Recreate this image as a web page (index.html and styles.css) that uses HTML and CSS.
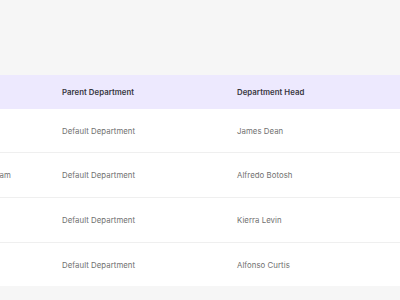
FILE: index.html
```html
<!DOCTYPE html>
<html lang="en">

<head>
    <meta charset="UTF-8">
    <meta name="viewport" content="width=device-width, initial-scale=1.0">
    <link rel="stylesheet" href="styles.css">
    <title>Departments</title>
</head>

<body>

    <div class="page">
        <div class="table-wrap">
            <table class="dept-table">
                <thead>
                    <tr>
                        <th class="col-name">Name</th>
                        <th class="col-parent">Parent Department</th>
                        <th class="col-head">Department Head</th>
                    </tr>
                </thead>
                <tbody>
                    <tr>
                        <td class="col-name">Sales</td>
                        <td>Default Department</td>
                        <td>James Dean</td>
                    </tr>
                    <tr>
                        <td class="col-name">Product Team</td>
                        <td>Default Department</td>
                        <td>Alfredo Botosh</td>
                    </tr>
                    <tr>
                        <td class="col-name">HR</td>
                        <td>Default Department</td>
                        <td>Kierra Levin</td>
                    </tr>
                    <tr>
                        <td class="col-name">IT</td>
                        <td>Default Department</td>
                        <td>Alfonso Curtis</td>
                    </tr>
                </tbody>
            </table>
        </div>
    </div>

</body>

</html>
```

FILE: styles.css
```css
body {
    margin: 0;
    padding: 0;
    background-color: #f6f6f6;
    font-family: Inter, "Noto Sans", sans-serif;
}

.page {
    padding-top: 75px;
    overflow: hidden;
    height: 300px;
    box-sizing: border-box;
}

/* table is scrolled sideways, first column mostly hidden */
.table-wrap {
    margin-left: -58px;
    background-color: #ffffff;
}

.dept-table {
    border-collapse: collapse;
    width: 478px;
    font-size: 7.8px;
    letter-spacing: 0.05px;
}

.dept-table th {
    background-color: #ede9fe;
    color: #37373f;
    font-weight: 600;
    text-align: left;
    height: 34px;
    padding: 0;
}

.dept-table td {
    color: #707070;
    height: 44px;
    padding: 0;
    border-bottom: 1px solid #efefef;
}

.dept-table tbody tr:first-child td {
    height: 43px;
}

.dept-table tbody tr:last-child td {
    border-bottom: none;
    height: 43px;
}

.dept-table .col-name {
    width: 103px;
    padding-left: 17px;
}

.col-parent {
    width: 175px;
}
```
